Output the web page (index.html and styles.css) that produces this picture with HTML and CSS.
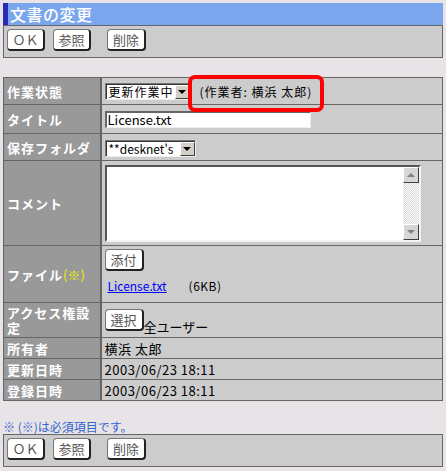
FILE: index.html
```html
<!DOCTYPE html>
<html lang="ja">
<head>
<meta charset="utf-8">
<title>文書の変更</title>
<link rel="stylesheet" href="styles.css">
</head>
<body>
<div class="page">
  <div class="titlebar">文書の変更</div>
  <div class="toolbar">
    <button class="btn">ＯＫ</button>
    <button class="btn">参照</button>
    <button class="btn btn-sep">削除</button>
  </div>

  <table class="form">
    <tr class="r-state">
      <th>作業状態</th>
      <td>
        <div class="inline">
          <span class="select sel-state"><span class="sel-text">更新作業中</span><span class="sel-btn"><span class="tri-down"></span></span></span>
          <span class="worker">(作業者: 横浜 太郎)</span>
        </div>
      </td>
    </tr>
    <tr class="r-title">
      <th>タイトル</th>
      <td><span class="textbox">License.txt</span></td>
    </tr>
    <tr class="r-folder">
      <th>保存フォルダ</th>
      <td><span class="select sel-folder"><span class="sel-text">**desknet's</span><span class="sel-btn"><span class="tri-down"></span></span></span></td>
    </tr>
    <tr class="r-comment">
      <th>コメント</th>
      <td>
        <div class="textarea">
          <div class="ta-body"></div>
          <div class="scrollbar">
            <span class="sb-btn"><span class="sb-up"></span></span>
            <span class="sb-track"></span>
            <span class="sb-btn"><span class="sb-down"></span></span>
          </div>
        </div>
      </td>
    </tr>
    <tr class="r-file">
      <th>ファイル<span class="req">(※)</span></th>
      <td>
        <button class="btn btn-small">添付</button>
        <div class="file-line"><a class="file-link" href="#">License.txt</a><span class="file-size">(6KB)</span></div>
      </td>
    </tr>
    <tr class="r-access">
      <th>アクセス権設定</th>
      <td><div class="access"><button class="btn btn-small">選択</button><span>全ユーザー</span></div></td>
    </tr>
    <tr class="r-small">
      <th>所有者</th>
      <td class="val">横浜 太郎</td>
    </tr>
    <tr class="r-small">
      <th>更新日時</th>
      <td class="val">2003/06/23 18:11</td>
    </tr>
    <tr class="r-small">
      <th>登録日時</th>
      <td class="val">2003/06/23 18:11</td>
    </tr>
  </table>

  <p class="note">※ (※)は必須項目です。</p>
  <div class="toolbar">
    <button class="btn">ＯＫ</button>
    <button class="btn">参照</button>
    <button class="btn btn-sep">削除</button>
  </div>

  <div class="highlight"></div>
</div>
</body>
</html>
```

FILE: styles.css
```css
* { box-sizing: border-box; }
html, body { margin: 0; }
body {
  background: #e7e3e7;
  padding: 3px;
  font-family: "Noto Sans CJK JP", "Noto Sans", sans-serif;
  font-size: 12px;
  color: #000;
}
.page { position: relative; width: 440px; }

.titlebar {
  height: 22px;
  background: #7aa6ee;
  border-left: 5px solid #2b2bb5;
  color: #fff;
  font-size: 16px;
  font-weight: 500;
  letter-spacing: 0.5px;
  line-height: 22px;
  padding-left: 2px;
}

.toolbar {
  height: 33px;
  background: #cccccc;
  border: 1px solid #666;
  display: flex;
  align-items: flex-start;
  gap: 8px;
  padding: 3px 0 0 3px;
}

.btn {
  width: 38px;
  height: 22px;
  margin: 0;
  padding: 0;
  background: #fff;
  border: 1px solid #777;
  border-right: 2px solid #222;
  border-bottom: 2px solid #222;
  border-radius: 4px;
  color: #555;
  font-family: inherit;
  font-size: 13px;
  line-height: 18px;
  text-align: center;
}
.btn-sep { margin-left: 8px; width: 39px; }
.btn-small { width: 39px; }

.form {
  margin-top: 19px;
  width: 440px;
  border-collapse: collapse;
}
.form th, .form td {
  border: 1px solid #666;
  padding: 0;
}
.form th {
  width: 97px;
  background: #999999;
  color: #fff;
  font-weight: bold;
  font-size: 13px;
  letter-spacing: 1px;
  text-align: left;
  padding-left: 3px;
  border-right: 2px solid #666;
  line-height: 15px;
}
.form td {
  background: #cccccc;
  padding-left: 3px;
}
.form td.val { font-size: 13px; letter-spacing: 0.5px; }
.r-state td, .r-state th { height: 27px; }
.r-title td, .r-title th { height: 29px; }
.r-folder td, .r-folder th { height: 27px; }
.r-comment td, .r-comment th { height: 85px; }
.r-file td, .r-file th { height: 57px; }
.r-access td, .r-access th { height: 35px; }
.r-small td, .r-small th { height: 21px; }

.req { color: #f0f000; font-weight: normal; letter-spacing: 0; }

.inline { display: flex; align-items: center; gap: 9px; }

.select {
  display: inline-flex;
  align-items: stretch;
  height: 17px;
  background: #fff;
  border-top: 1px solid #777;
  border-left: 1px solid #777;
  border-right: 1px solid #eee;
  border-bottom: 1px solid #eee;
  box-shadow: inset 1px 1px 0 #333;
  vertical-align: middle;
}
.sel-state { width: 86px; }
.sel-folder { width: 91px; }
.sel-text {
  flex: 1;
  padding-left: 3px;
  padding-top: 1px;
  line-height: 14px;
  font-size: 12px;
  white-space: nowrap;
}
.sel-state .sel-text { letter-spacing: 1px; }
.sel-btn {
  flex: 0 0 15px;
  width: 15px;
  margin: 1px 0 0 0;
  background: #d4d0c8;
  border-top: 1px solid #fff;
  border-left: 1px solid #fff;
  border-right: 1px solid #404040;
  border-bottom: 1px solid #404040;
  display: flex;
  align-items: center;
  justify-content: center;
}
.tri-down {
  width: 0; height: 0;
  border-left: 4px solid transparent;
  border-right: 4px solid transparent;
  border-top: 4px solid #000;
}

.worker { font-size: 12px; letter-spacing: 1px; white-space: nowrap; }

.textbox {
  display: block;
  width: 206px;
  height: 17px;
  background: #fff;
  border-top: 2px solid #666;
  border-left: 2px solid #666;
  border-right: 1px solid #eee;
  border-bottom: 1px solid #eee;
  font-size: 13px;
  line-height: 14px;
  padding-left: 1px;
}

.textarea {
  display: flex;
  width: 316px;
  height: 77px;
  background: #fff;
  border-top: 2px solid #555;
  border-left: 2px solid #555;
  border-right: 2px solid #f4f4f4;
  border-bottom: 2px solid #f4f4f4;
}
.ta-body { flex: 1; }
.scrollbar {
  width: 16px;
  display: flex;
  flex-direction: column;
}
.sb-btn {
  height: 16px;
  background: #d8d6d4;
  border-top: 1px solid #fff;
  border-left: 1px solid #fff;
  border-right: 1px solid #404040;
  border-bottom: 1px solid #404040;
  display: flex;
  align-items: center;
  justify-content: center;
}
.sb-track {
  flex: 1;
  background-color: #fff;
  background-image: repeating-conic-gradient(#d8d8d8 0 25%, #fff 0 50%);
  background-size: 2px 2px;
}
.sb-up {
  width: 0; height: 0;
  border-left: 4px solid transparent;
  border-right: 4px solid transparent;
  border-bottom: 4px solid #808080;
}
.sb-down {
  width: 0; height: 0;
  border-left: 4px solid transparent;
  border-right: 4px solid transparent;
  border-top: 4px solid #808080;
}

.r-file td { vertical-align: top; padding-top: 3px; }
.file-line { margin-top: 8px; padding-left: 3px; line-height: 14px; }
.file-link { color: #0000ff; text-decoration: underline; }
.file-size { margin-left: 22px; letter-spacing: 0.5px; }

.access { display: flex; align-items: flex-end; }
.access span { font-size: 13px; line-height: 13px; margin-bottom: -2px; }

.note {
  margin: 19px 0 0;
  line-height: 14px;
  height: 14px;
  color: #3366cc;
  font-size: 12px;
}

.highlight {
  position: absolute;
  left: 185px;
  top: 72px;
  width: 136px;
  height: 37px;
  border: 4px solid #ff0000;
  border-radius: 7px;
}
```
